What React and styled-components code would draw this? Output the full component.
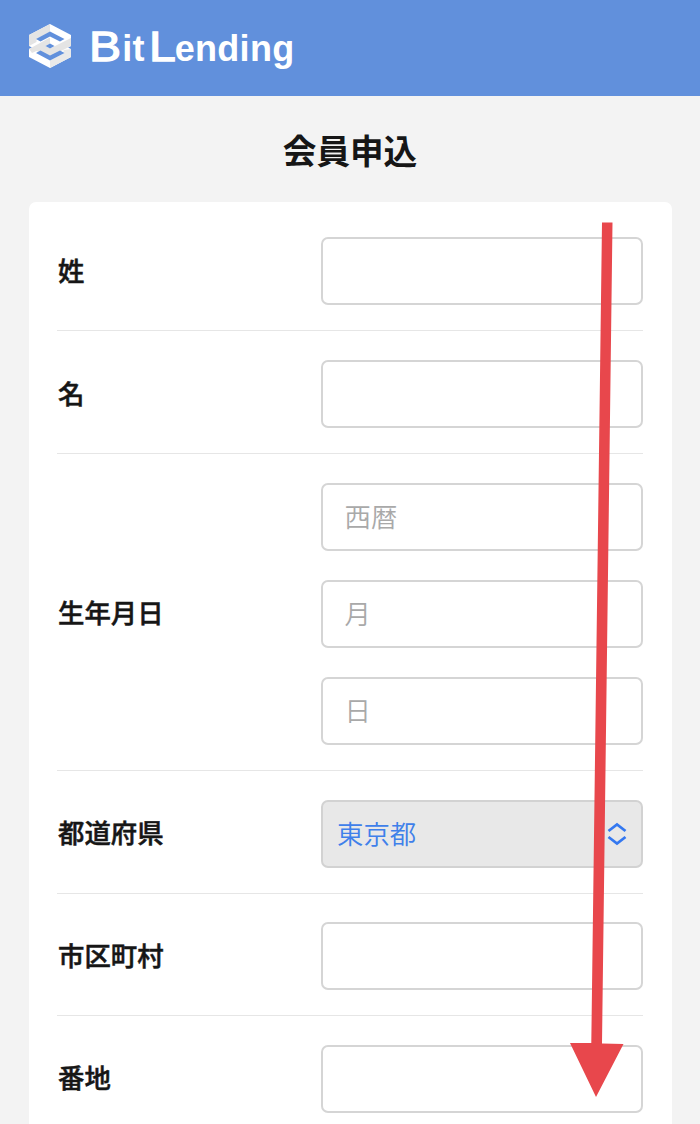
import React from "react";
import styled, { createGlobalStyle } from "styled-components";

const GlobalStyle = createGlobalStyle`
  * {
    box-sizing: border-box;
  }
  body {
    margin: 0;
    height: 1124px;
    overflow: hidden;
    background-color: #f3f3f3;
    color: #161616;
    font-family: "Noto Sans CJK JP", sans-serif;
  }
`;

const Container = styled.div`
  position: relative;
  height: 1124px;
  overflow: hidden;
`;

const Header = styled.header`
  display: flex;
  align-items: center;
  height: 96px;
  padding: 0 28px;
  background-color: #6190dc;
`;

const LogoMark = styled.svg`
  width: 44px;
  height: 46px;
  margin-bottom: 4px;
`;

const LogoText = styled.div`
  margin-left: 17px;
  padding-bottom: 1px;
  font-family: "Liberation Sans", Arial, sans-serif;
  font-size: 36px;
  font-weight: 700;
  line-height: 48px;
  letter-spacing: 0.3px;
  color: white;
  white-space: nowrap;
`;

const Capital = styled.span`
  display: inline-block;
  margin-left: ${(props) => (props.$gap ? "4px" : "0")};
  margin-right: ${(props) => (props.$gap ? "2px" : "4.5px")};
  font-size: 43px;
  font-weight: 400;
  letter-spacing: 0;
  transform: scaleX(1.12);
  transform-origin: left;
  -webkit-text-stroke: 1.3px white;
`;

const Title = styled.h1`
  height: 106px;
  margin: 0;
  padding-top: 30px;
  font-size: 33.6px;
  font-weight: 600;
  line-height: 48px;
  text-align: center;
`;

const Card = styled.form`
  margin: 0 28.5px;
  padding: 6.8px 28.5px 0;
  background-color: white;
  border-radius: 7px;
`;

const Row = styled.div`
  display: flex;
  align-items: center;
  justify-content: space-between;
  padding: 28.7px 0 25px;
  border-bottom: 1px solid #e6e6e6;
`;

const Label = styled.label`
  padding: 0 0 3px 1px;
  font-size: 26.4px;
  font-weight: 500;
  line-height: 40px;
  -webkit-text-stroke: 0.5px #161616;
`;

const Fields = styled.div`
  display: flex;
  flex-direction: column;
  gap: 29px;
  width: 322px;
`;

const Input = styled.input`
  width: 100%;
  height: 68px;
  padding: 0 21.5px 3px;
  border: 2px solid #d5d5d5;
  border-radius: 7px;
  background-color: white;
  font-family: inherit;
  font-size: 26.4px;
  font-weight: 350;
  outline: none;
  &::placeholder {
    color: #a9a9a9;
    opacity: 1;
  }
`;

const Select = styled.button`
  display: flex;
  align-items: center;
  justify-content: space-between;
  width: 100%;
  height: 68px;
  padding: 0 14px;
  border: 2px solid #d2d2d2;
  border-radius: 7px;
  background-color: #e8e8e8;
  color: #3f80ea;
  font-family: inherit;
  font-size: 26.4px;
  font-weight: 350;
`;

const SelectValue = styled.span`
  padding-bottom: 3px;
`;

const Arrow = styled.svg`
  position: absolute;
  top: 222px;
  left: 570px;
  width: 54px;
  height: 876px;
  pointer-events: none;
`;

const rows = [
  { label: "姓", fields: [""] },
  { label: "名", fields: [""] },
  { label: "生年月日", fields: ["西暦", "月", "日"] },
  { label: "都道府県", selected: "東京都" },
  { label: "市区町村", fields: [""] },
  { label: "番地", fields: [""] },
];

const Logo = () => (
  <LogoMark viewBox="0 0 44 46">
    <path d="M22 1 43 12v11l-3 1.5 3 1.5v8L22 45 1 34V26l3-1.5L1 23V12z" fill="white" />
    <path d="M22 1v8L8.5 16v3L1 23V12z" fill="#e4e4e4" />
    <path d="M1 26 22 14.5v6L17.5 23l4.5 2.5L43 15v8L22 33.5 8.5 28 4 30z" fill="#e4e4e4" />
    <path d="M22 37.5 35.5 30.5V27l7.5-1v8L22 45z" fill="#e9e9e9" />
    <path d="M22 8.5 36.5 16 32 18.5 22 13.5 12.5 18.5 8 16z" fill="#6190dc" />
    <path d="M22 37.5 36.5 30 32 27.5 22 32.5 12.5 27.5 8 30z" fill="#6190dc" />
    <path d="M22 20.5 26.5 23 22 25.5 17.5 23z" fill="#6190dc" />
  </LogoMark>
);

const App = () => {
  return (
    <Container>
      <GlobalStyle />
      <Header>
        <Logo />
        <LogoText>
          <Capital>B</Capital>it<Capital $gap>L</Capital>ending
        </LogoText>
      </Header>
      <Title>会員申込</Title>
      <Card>
        {rows.map((row) => (
          <Row key={row.label}>
            <Label>{row.label}</Label>
            <Fields>
              {row.selected ? (
                <Select type="button">
                  <SelectValue>{row.selected}</SelectValue>
                  <svg width="20" height="24" viewBox="0 0 20 24">
                    <path
                      d="M1.5 9 10 2.5 18.5 9M1.5 15 10 21.5 18.5 15"
                      fill="none"
                      stroke="#3478f0"
                      strokeWidth="2.8"
                    />
                  </svg>
                </Select>
              ) : (
                row.fields.map((placeholder, i) => (
                  <Input key={i} placeholder={placeholder} />
                ))
              )}
            </Fields>
          </Row>
        ))}
      </Card>
      <Arrow viewBox="0 0 54 876">
        <path d="M32 .5H42.5L32 821.5 53.5 822 26 875 0 821H21.3z" fill="#e8474c" />
      </Arrow>
    </Container>
  );
};

export default App;
